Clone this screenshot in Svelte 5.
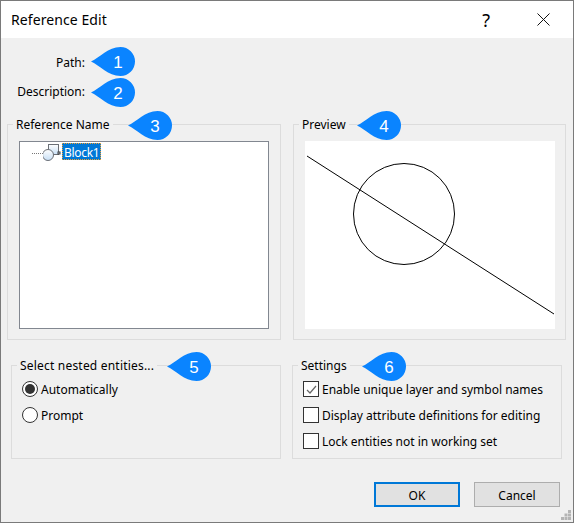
<script>
  // speech-bubble markers that sit over the dialog
  const callouts = [
    { n: 1, x: 91, y: 47 },
    { n: 2, x: 91, y: 78 },
    { n: 3, x: 128, y: 111 },
    { n: 4, x: 357, y: 111 },
    { n: 5, x: 167, y: 352 },
    { n: 6, x: 362, y: 352 }
  ];

  const settings = [
    { label: 'Enable unique layer and symbol names', checked: true },
    { label: 'Display attribute definitions for editing', checked: false },
    { label: 'Lock entities not in working set', checked: false }
  ];
</script>

<div class="window">
  <header class="titlebar">
    <span class="title">Reference Edit</span>
    <span class="help">?</span>
    <svg class="close" width="13" height="13" viewBox="0 0 13 13">
      <path d="M.5.5l12 12M12.5.5l-12 12" stroke="#111" fill="none" />
    </svg>
  </header>

  <div class="body">
    <div class="fields">
      <div class="field-label">Path:</div>
      <div class="field-label">Description:</div>
    </div>

    <div class="top-row">
      <fieldset>
        <legend>Reference Name</legend>
        <div class="tree">
          <span class="tree-dots"></span>
          <svg class="tree-icon" width="22" height="20" viewBox="0 0 22 20">
            <defs>
              <linearGradient id="fill" x1="0" y1="0" x2="0" y2="1">
                <stop offset="0" stop-color="#ffffff" />
                <stop offset="1" stop-color="#c6def5" />
              </linearGradient>
            </defs>
            <rect x="5.5" y="1.5" width="10" height="10" fill="url(#fill)" stroke="#6b6f76" />
            <circle cx="5" cy="12" r="5.5" fill="url(#fill)" stroke="#6b6f76" />
            <rect x="15" y="9" width="2" height="2" fill="#fff" stroke="#33363a" />
          </svg>
          <span class="tree-item">Block1</span>
        </div>
      </fieldset>

      <fieldset>
        <legend>Preview</legend>
        <svg class="preview" width="250" height="188" viewBox="0 0 250 188">
          <line x1="2" y1="15" x2="249" y2="173" stroke="#000" />
          <circle cx="99" cy="73" r="50.5" fill="none" stroke="#000" />
        </svg>
      </fieldset>
    </div>

    <div class="bottom-row">
      <fieldset class="short">
        <legend class="wide">Select nested entities...</legend>
        <div class="option"><span class="radio on"></span>Automatically</div>
        <div class="option"><span class="radio"></span>Prompt</div>
      </fieldset>

      <fieldset class="short">
        <legend>Settings</legend>
        {#each settings as item}
          <div class="option setting">
            <span class="check">
              {#if item.checked}
                <svg width="13" height="13" viewBox="0 0 13 13">
                  <path d="M2 7l3 3 6-7" stroke="#666" stroke-width="1.2" fill="none" />
                </svg>
              {/if}
            </span>
            {item.label}
          </div>
        {/each}
      </fieldset>
    </div>

    <div class="buttons">
      <button class="default">OK</button>
      <button>Cancel</button>
    </div>
  </div>

  <svg class="grip" width="10" height="10" viewBox="0 0 10 10">
    <path d="M7 0h3v3H7zM3.500 3.500h3v3h-3zM7 3.500h3v3H7zM0 7h3v3H0zM3.500 7h3v3h-3zM7 7h3v3H7z" fill="#b4b4b4" />
  </svg>

  {#each callouts as c}
    <div class="callout" style="left: {c.x}px; top: {c.y}px">
      <svg width="44" height="29" viewBox="0 0 44 29">
        <path d="M0 14.500C9 10.500 17 0 29.500 0a14.500 14.500 0 0 1 0 29C17 29 9 18.500 0 14.500z" fill="#0a84ff" />
      </svg>
      <span>{c.n}</span>
    </div>
  {/each}
</div>

<style>
  :global(body) {
    margin: 0;
  }
  .window {
    position: relative;
    box-sizing: border-box;
    width: 574px;
    height: 523px;
    border: 1px solid #7a7a7a;
    background: #f0f0f0;
    font-family: "Noto Sans", sans-serif;
    font-size: 12px;
    color: #000;
    display: flex;
    flex-direction: column;
  }
  .titlebar {
    display: flex;
    align-items: center;
    height: 37px;
    background: #fff;
    padding-left: 10px;
  }
  .title {
    font-size: 14px;
    letter-spacing: 0.08px;
    flex: 1;
  }
  .help {
    font-size: 18px;
    margin-right: 47px;
  }
  .close {
    margin-right: 23px;
  }
  .body {
    flex: 1;
    display: flex;
    flex-direction: column;
  }
  .fields {
    width: 84px;
    padding-top: 9px;
    display: flex;
    flex-direction: column;
    height: 69px;
    box-sizing: border-box;
  }
  .field-label {
    height: 29px;
    line-height: 31px;
    text-align: right;
    white-space: nowrap;
  }
  .top-row {
    display: grid;
    grid-template-columns: 274px 273px;
    gap: 12px;
    padding-left: 6px;
    margin-top: 9px;
  }
  .bottom-row {
    display: grid;
    grid-template-columns: 270px 270px;
    gap: 11px;
    padding-left: 10px;
    margin-top: 17px;
  }
  fieldset {
    box-sizing: border-box;
    margin: 0;
    padding: 0 11px 10px;
    border: 1px solid #dcdcdc;
    min-width: 0;
    height: 224px;
  }
  fieldset.short {
    height: 102px;
    padding: 3px 0 0 10px;
  }
  legend {
    margin-left: -6px;
    padding: 0 3px;
    height: 16px;
    line-height: 18px;
    font-size: 12px;
    white-space: nowrap;
  }
  .short legend {
    margin-left: -5px;
  }
  legend.wide {
    letter-spacing: 0.2px;
  }
  .tree {
    box-sizing: border-box;
    height: 188px;
    width: 250px;
    margin-top: 9px;
    background: #fff;
    border: 1px solid #828790;
    display: flex;
    align-items: flex-start;
    padding: 1px 0 0 12px;
  }
  .tree-dots {
    width: 11px;
    margin-top: 10px;
    border-top: 1px dotted #777;
  }
  .tree-icon {
    flex: none;
  }
  .tree-item {
    box-sizing: border-box;
    margin-left: -3px;
    background: #0078d7;
    color: #fff;
    border: 1px dotted #f0a030;
    height: 17px;
    line-height: 18px;
    padding: 0 1px;
    letter-spacing: -0.3px;
  }
  .preview {
    display: block;
    margin-top: 9px;
    background: #fff;
  }
  .option {
    display: flex;
    align-items: center;
    gap: 3px;
    height: 26px;
    white-space: nowrap;
  }
  .radio {
    box-sizing: border-box;
    width: 16px;
    height: 16px;
    border-radius: 50%;
    border: 1px solid #333;
    background: #fff;
    display: flex;
    align-items: center;
    justify-content: center;
  }
  .radio.on::after {
    content: "";
    width: 10px;
    height: 10px;
    border-radius: 50%;
    background: #333;
  }
  .check {
    box-sizing: border-box;
    width: 16px;
    height: 16px;
    border: 1px solid #333;
    background: #fff;
    display: flex;
    align-items: center;
    justify-content: center;
  }
  .buttons {
    display: flex;
    justify-content: flex-end;
    gap: 14px;
    padding-right: 13px;
    margin-top: 23px;
  }
  button {
    box-sizing: border-box;
    width: 86px;
    height: 25px;
    padding: 2px 0 0;
    background: #e1e1e1;
    border: 1px solid #adadad;
    font: inherit;
    color: #000;
  }
  button.default {
    border: 2px solid #0078d7;
  }
  .grip {
    position: absolute;
    right: 2px;
    bottom: 2px;
  }
  .callout {
    position: absolute;
    width: 44px;
    height: 29px;
    margin: -1px 0 0 -1px;
  }
  .callout svg {
    display: block;
  }
  .callout span {
    position: absolute;
    left: 17px;
    width: 20px;
    top: 1px;
    line-height: 29px;
    text-align: center;
    color: #fff;
    font-family: "Liberation Sans", sans-serif;
    font-size: 17px;
  }
</style>
